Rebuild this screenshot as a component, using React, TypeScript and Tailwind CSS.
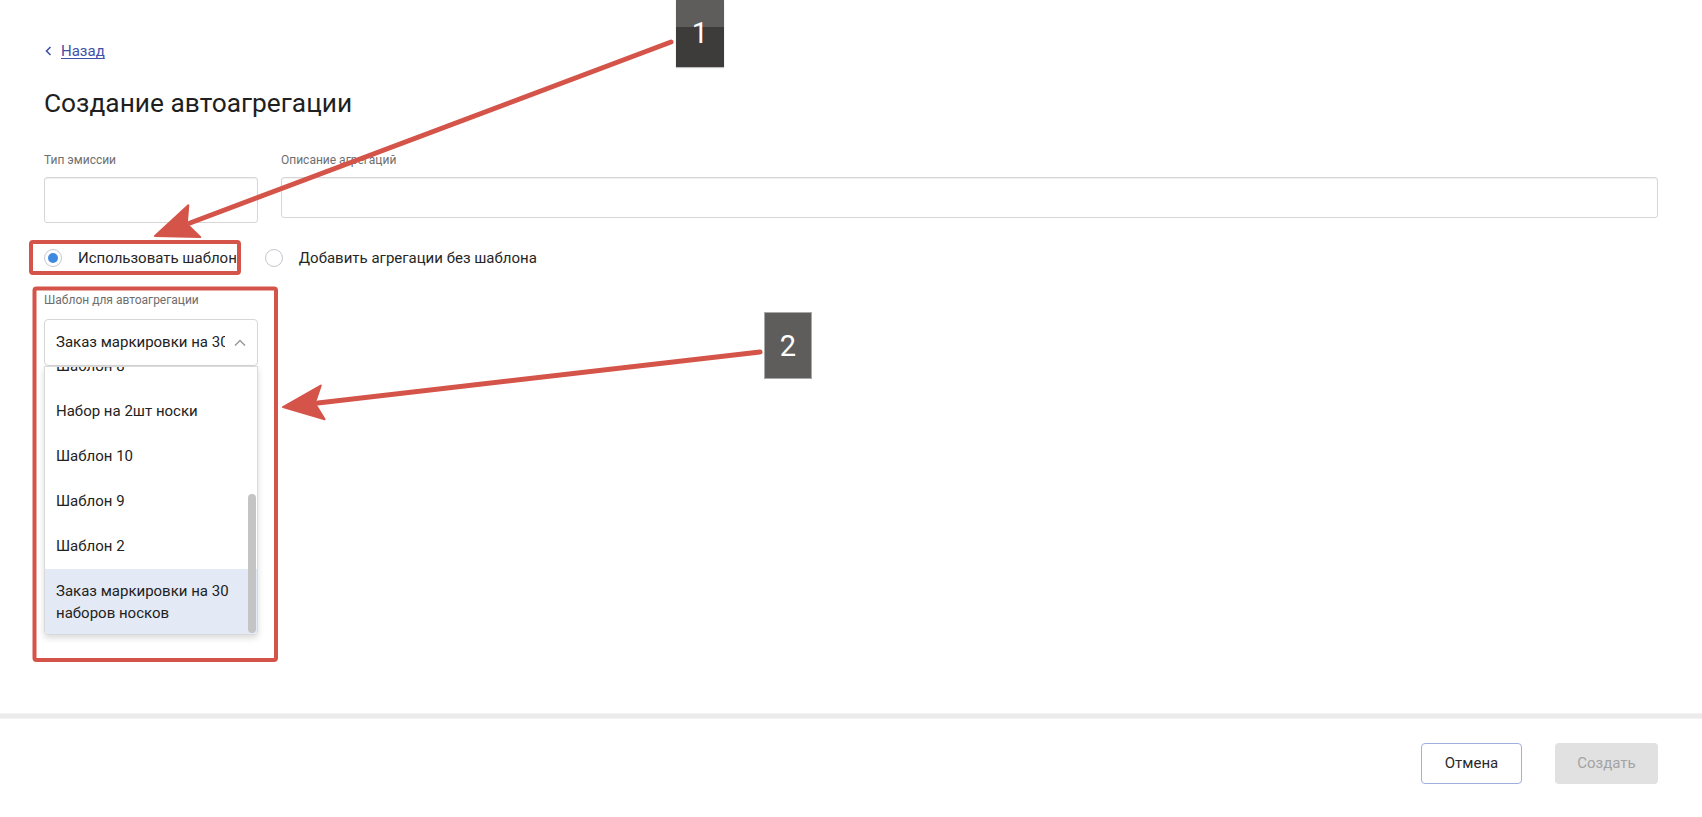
import { useState } from "react";

const templates = ["Шаблон 8", "Набор на 2шт носки", "Шаблон 10", "Шаблон 9", "Шаблон 2"];
const selectedTemplate = "Заказ маркировки на 30 наборов носков";

function Radio({ checked, label, onClick }: { checked: boolean; label: string; onClick: () => void }) {
  return (
    <label className="flex items-center gap-4 cursor-pointer" onClick={onClick}>
      <span className="flex h-[18px] w-[18px] items-center justify-center rounded-full border-[1.5px] border-[#c2c7cf] bg-white">
        {checked && <span className="h-[10px] w-[10px] rounded-full bg-[#3f8ae0]" />}
      </span>
      <span className="text-[15px] leading-[24px] text-[#262626]">{label}</span>
    </label>
  );
}

function Annotations() {
  return (
    <div className="pointer-events-none absolute inset-0">
      <svg className="absolute inset-0" width="1702" height="817" viewBox="0 0 1702 817">
        {/* рамки */}
        <rect x="31" y="242" width="208" height="31" rx="2" fill="none" stroke="#d5544a" strokeWidth="4" />
        <rect x="34.5" y="288.5" width="241.5" height="371.5" rx="2" fill="none" stroke="#d5544a" strokeWidth="4" />
        {/* стрелка 1 */}
        <line x1="671" y1="42" x2="190" y2="223" stroke="#d5544a" strokeWidth="5" strokeLinecap="round" />
        <polygon points="155,236 188.3,205.3 186.8,224 200.3,237.1" fill="#d5544a" stroke="#d5544a" strokeWidth="2" strokeLinejoin="round" />
        {/* стрелка 2 */}
        <line x1="760" y1="352" x2="318" y2="403" stroke="#d5544a" strokeWidth="5" strokeLinecap="round" />
        <polygon points="283,407 320.8,385.5 314.8,403.3 324.6,419.3" fill="#d5544a" stroke="#d5544a" strokeWidth="2" strokeLinejoin="round" />
      </svg>
      <div className="absolute left-[676px] top-0 flex h-[67px] w-[48px] flex-col overflow-hidden shadow-[0_1px_1px_rgba(0,0,0,0.25)]">
        <div className="h-[27px] bg-[#5e5d5b]" />
        <div className="flex-1 bg-[#3e3c3a]" />
        <span className="absolute inset-x-0 top-[15px] text-center text-[29px] leading-[36px] text-white">1</span>
      </div>
      <div className="absolute left-[764px] top-[312px] flex h-[67px] w-[48px] items-center justify-center border border-[#a8a8a8] bg-[#5e5d5b]">
        <span className="text-[29px] leading-[36px] text-white">2</span>
      </div>
    </div>
  );
}

export default function App() {
  const [useTemplate, setUseTemplate] = useState(true);

  return (
    <div className="relative flex h-[817px] w-full flex-col bg-white font-['Roboto',_'Liberation_Sans',_sans-serif] text-[#222]">
      <main className="flex-1 px-[44px] pt-[41px]">
        <a href="#" className="flex items-center gap-[8px] text-[15px] leading-[20px] text-[#3f51a8]">
          <svg width="9" height="12" viewBox="0 0 9 12" fill="none">
            <path d="M6.5 2 L2.5 6 L6.5 10" stroke="#3f51a8" strokeWidth="1.6" />
          </svg>
          <span className="underline underline-offset-2">Назад</span>
        </a>

        <h1 className="mt-[26px] text-[26.3px] leading-[32px] font-normal text-[#1f1f1f]">Создание автоагрегации</h1>

        {/* Поля */}
        <div className="mt-[33px] flex gap-[23px]">
          <div className="w-[214px]">
            <div className="text-[12px] leading-[16px] text-[#6e6e6e]">Тип эмиссии</div>
            <div className="mt-[9px] h-[46px] rounded-[3px] border border-[#d6d6d6] shadow-[inset_0_1px_1px_rgba(0,0,0,0.06)]" />
          </div>
          <div className="flex-1">
            <div className="text-[12px] leading-[16px] text-[#6e6e6e]">Описание агрегаций</div>
            <div className="mt-[9px] h-[41px] rounded-[3px] border border-[#d6d6d6] shadow-[inset_0_1px_1px_rgba(0,0,0,0.06)]" />
          </div>
        </div>

        <div className="mt-[23px] flex items-center gap-[28px]">
          <Radio checked={useTemplate} label="Использовать шаблон" onClick={() => setUseTemplate(true)} />
          <Radio checked={!useTemplate} label="Добавить агрегации без шаблона" onClick={() => setUseTemplate(false)} />
        </div>

        <div className="mt-[22px] w-[214px]">
          <div className="text-[12px] leading-[16px] text-[#6e6e6e]">Шаблон для автоагрегации</div>
          <div className="relative mt-[11px]">
            <div className="flex h-[47px] items-center rounded-[4px] border border-[#d6d6d6] pl-[11px] pr-[10px]">
              <span className="flex-1 overflow-hidden whitespace-nowrap text-[15px] text-[#222]">{selectedTemplate}</span>
              <svg className="ml-[8px] shrink-0" width="14" height="10" viewBox="0 0 14 10" fill="none">
                <path d="M2 7.5 L7 2.5 L12 7.5" stroke="#9a9a9a" strokeWidth="1.5" />
              </svg>
            </div>

            {/* выпадающий список */}
            <div className="absolute left-0 top-[47px] z-10 h-[269px] w-full overflow-hidden rounded-b-[4px] border border-[#d9d9d9] bg-white shadow-[0_3px_6px_rgba(0,0,0,0.15)]">
              <div className="mt-[-23.5px]">
                {templates.map((t) => (
                  <div key={t} className="flex h-[45px] items-center px-[11px] text-[15px] text-[#222]">
                    {t}
                  </div>
                ))}
                <div className="bg-[#e3eaf6] py-[11px] pl-[11px] pr-[20px] text-[15px] leading-[22px] text-[#222]">
                  {selectedTemplate}
                </div>
              </div>
              <div className="absolute right-[1px] top-[127px] h-[139px] w-[8px] rounded-[4px] bg-[#c4c4c4]" />
            </div>
          </div>
        </div>
      </main>

      <div className="h-[6px] border-y border-[#f2f2f2] bg-[#ebebeb]" />

      <footer className="flex h-[98px] justify-end gap-[33px] px-[44px] pt-[24px]">
        <button className="h-[41px] w-[101px] rounded-[4px] border border-[#9fb0dc] bg-white text-[15px] text-[#2b2b2b]">
          Отмена
        </button>
        <button disabled className="h-[41px] w-[103px] rounded-[4px] bg-[#e1e1e1] text-[15px] text-[#a3a3a3]">
          Создать
        </button>
      </footer>

      <Annotations />
    </div>
  );
}
